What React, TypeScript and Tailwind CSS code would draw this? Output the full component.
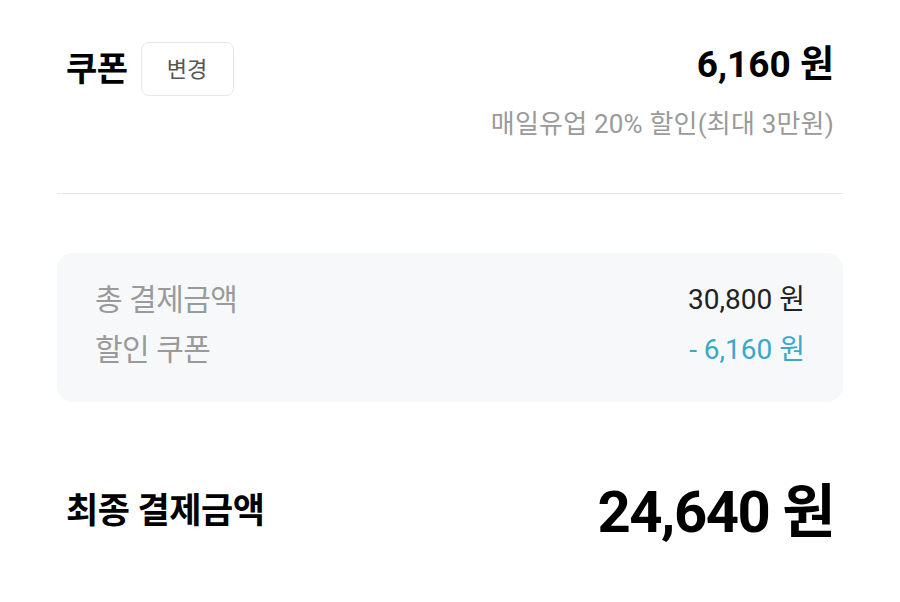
export default function App() {
    return (
        <div
            className="w-[900px] h-[602px] bg-white overflow-hidden"
            style={{ fontFamily: 'Roboto, "Noto Sans CJK KR", sans-serif' }}
        >
            <section className="px-[57px] pt-[42px]">
                <div className="flex items-start justify-between px-[9px]">
                    <div className="flex items-center gap-[13px]">
                        <h2 className="text-[34px] font-bold text-black leading-[40px] tracking-[-0.5px]">쿠폰</h2>
                        <button className="h-[54px] w-[93px] rounded-[8px] border border-gray-200 text-[22px] text-[#555] bg-white">
                            변경
                        </button>
                    </div>
                    <div className="flex flex-col items-end pt-[3px]">
                        <span className="text-[37px] font-bold text-black leading-[40px]">6,160 원</span>
                        <span className="mt-[23px] text-[26px] text-[#9a9a9a] leading-[32px] tracking-[0.2px]">
                            매일유업 20% 할인(최대 3만원)
                        </span>
                    </div>
                </div>
                <div className="mt-[53px] border-t border-gray-200" />

                <div className="mt-[59px] rounded-[16px] bg-[#f7f8fa] px-[38px] pt-[29px] pb-[34px] flex flex-col gap-[14px]">
                    <div className="flex items-center justify-between">
                        <span className="text-[30px] text-[#9a9a9a] leading-[36px] tracking-[-0.5px]">총 결제금액</span>
                        <span className="text-[28px] text-[#222] leading-[36px]">30,800 원</span>
                    </div>
                    <div className="flex items-center justify-between">
                        <span className="text-[30px] text-[#9a9a9a] leading-[36px] tracking-[-0.5px]">할인 쿠폰</span>
                        <span className="text-[28px] text-[#3aa8c8] leading-[36px]">- 6,160 원</span>
                    </div>
                </div>

                <div className="mt-[78px] flex items-center justify-between px-[9px]">
                    <span className="text-[35px] font-bold text-black leading-[64px] tracking-[-0.5px]">최종 결제금액</span>
                    <span className="text-[58px] font-bold text-black leading-[64px] tracking-[-1.5px]">24,640 원</span>
                </div>
            </section>
        </div>
    );
}
